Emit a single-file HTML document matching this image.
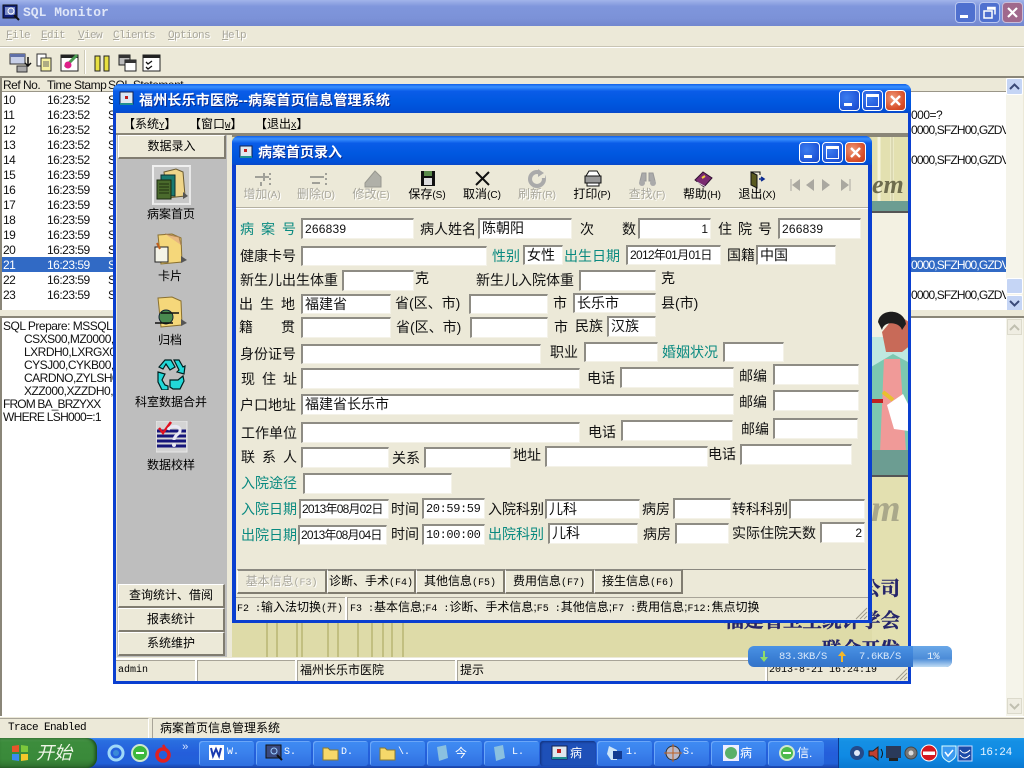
<!DOCTYPE html>
<html><head><meta charset="utf-8"><title>SQL Monitor</title>
<style>
html,body{margin:0;padding:0;width:1024px;height:768px;overflow:hidden;background:#fff}
body{position:relative;font-family:"Liberation Sans","WenQuanYi Zen Hei","Noto Sans CJK SC",sans-serif;font-size:12px;color:#000}
div,i,b,svg,span.a{position:absolute;display:block;font-style:normal;font-weight:normal;box-sizing:border-box}
.t{font-size:14px;line-height:16px;white-space:nowrap;color:#111}
.c{color:#0a8a80}
.m{font-family:"Liberation Mono","WenQuanYi Zen Hei",monospace}
.in{background:#fff;border-top:2px solid #8e8c84;border-left:2px solid #8e8c84;border-right:1px solid #f4f2e8;border-bottom:1px solid #f4f2e8;font-size:14px;line-height:16px;padding:0 0 0 2px;white-space:nowrap;overflow:hidden;color:#111}
.r{font-size:12px;line-height:15px;white-space:nowrap;letter-spacing:-.5px;color:#111}
.n{letter-spacing:-.85px}
.btn{background:#ece9d8;border-top:1px solid #fff;border-left:1px solid #fff;border-right:2px solid #807c70;border-bottom:2px solid #807c70;text-align:center;line-height:21px;font-size:12px}
.tab{background:#ece9d8;border-top:2px solid #8a8880;border-left:1px solid #fff;border-right:2px solid #807c70;border-bottom:2px solid #807c70;text-align:center;line-height:21px;font-size:12px;white-space:nowrap;top:569px;height:25px}
.tb{font-size:12px;line-height:14px;white-space:nowrap;top:187px;width:56px;text-align:center}
.g{color:#a9a79c;text-shadow:1px 1px 0 #fff}
.mn{top:29px;font-size:11px;line-height:14px;letter-spacing:-.6px}
.ws{width:21px;height:21px;border:1px solid #fff;border-radius:4px;background:radial-gradient(circle at 35% 35%,#3c7df0,#1f55d8 70%,#1a48c0)}
.wc{background:radial-gradient(circle at 35% 35%,#ef9a78,#d84f2a 65%,#c23c18)}
.tk{top:741px;height:25px;background:linear-gradient(#3f8cf3,#3a80ec 50%,#2f6fe0);border-radius:3px;color:#fff;font-size:12px;line-height:24px;white-space:nowrap;box-shadow:inset 1px 1px 0 #6aa6f8}
.lab{font-size:12px;line-height:14px;text-align:center;left:118px;width:108px}
.sf{font-family:'Noto Serif CJK SC',serif;font-weight:700;font-size:19.5px;line-height:24px;color:#25256a;white-space:nowrap;text-align:right;-webkit-text-stroke:.4px #25256a}
</style></head><body>

<!-- Outer SQL Monitor window -->
<div style="left:0;top:0;width:1024px;height:768px;background:#ece9d8"></div>
<div style="left:0;top:0;width:1024px;height:26px;background:linear-gradient(#a2b4ea,#7f96dc 25%,#7c92d8 70%,#7287cf)"></div>
<svg style="left:2px;top:4px" width="18" height="18"><rect x="1" y="1" width="14" height="13" fill="#10207a" stroke="#111"/><rect x="3" y="3" width="10" height="8" fill="#7a8cc8"/><circle cx="9" cy="7" r="3" fill="none" stroke="#fff"/><path d="M12 11l5 5" stroke="#111" stroke-width="2"/></svg>
<div class="m" style="left:23px;top:5px;font-size:13px;line-height:16px;color:#dfe6f8;font-weight:700">SQL Monitor</div>
<div style="left:955px;top:2px;width:21px;height:21px;border:1px solid #b8c6f0;border-radius:4px;background:#4f70cf"></div>
<div style="left:960px;top:15px;width:8px;height:3px;background:#fff"></div>
<div style="left:979px;top:2px;width:21px;height:21px;border:1px solid #b8c6f0;border-radius:4px;background:#4f70cf"></div>
<svg style="left:982px;top:5px" width="15" height="15"><path d="M5 2.5h8v7M5 4h8" fill="none" stroke="#fff" stroke-width="1.5"/><rect x="2" y="6" width="8" height="7" fill="none" stroke="#fff" stroke-width="1.5"/></svg>
<div style="left:1002px;top:2px;width:21px;height:21px;border:1px solid #c8bcd8;border-radius:4px;background:#a0688c"></div>
<svg style="left:1005px;top:5px" width="15" height="15"><path d="M3 3l9 9M12 3l-9 9" stroke="#fff" stroke-width="2.2"/></svg>

<!-- menu -->
<div class="m g mn" style="left:6px"><u>F</u>ile</div>
<div class="m g mn" style="left:41px"><u>E</u>dit</div>
<div class="m g mn" style="left:78px"><u>V</u>iew</div>
<div class="m g mn" style="left:113px"><u>C</u>lients</div>
<div class="m g mn" style="left:168px"><u>O</u>ptions</div>
<div class="m g mn" style="left:222px"><u>H</u>elp</div>
<div style="left:0;top:46px;width:1024px;height:2px;background:#fff;border-top:1px solid #c8c4b4"></div>
<!-- toolbar icons -->
<svg style="left:8px;top:52px" width="170" height="22">
<rect x="2" y="2" width="15" height="10" fill="#c8d0e8" stroke="#333"/><rect x="2" y="2" width="15" height="3" fill="#6070a8"/><rect x="9" y="14" width="10" height="6" fill="#aaa" stroke="#333"/><path d="M20 5v8m-3-2l3 3 3-3" fill="none" stroke="#111" stroke-width="1.5"/>
<rect x="29" y="2" width="9" height="12" fill="#fff" stroke="#333"/><rect x="33" y="6" width="10" height="13" fill="#f6f0a0" stroke="#333"/><path d="M35 10h6M35 12h6M35 14h6" stroke="#666"/>
<rect x="53" y="3" width="17" height="16" fill="#fff" stroke="#222"/><rect x="53" y="3" width="17" height="3" fill="#222"/><path d="M57 15l8-8 4-4" stroke="#4a9a50" stroke-width="3"/><circle cx="60" cy="13" r="3.5" fill="#e0208a"/>
<rect x="87" y="4" width="5" height="15" fill="#e8e040" stroke="#222"/><rect x="96" y="4" width="5" height="15" fill="#e8e040" stroke="#222"/>
<rect x="111" y="3" width="11" height="10" fill="#bbb" stroke="#222"/><rect x="111" y="3" width="11" height="3" fill="#333"/><rect x="117" y="8" width="11" height="11" fill="#fff" stroke="#222"/><rect x="117" y="8" width="11" height="3" fill="#333"/>
<rect x="135" y="3" width="17" height="16" fill="#fff" stroke="#222"/><rect x="135" y="3" width="17" height="3" fill="#222"/><path d="M138 10l2 2 4-3M138 15l2 2 4-3" fill="none" stroke="#111" stroke-width="1.3"/>
</svg>
<div style="left:84px;top:50px;width:2px;height:24px;background:#cfcbb8;border-right:1px solid #fff"></div>

<!-- list -->
<div style="left:0;top:76px;width:1024px;height:2px;background:#8a8678"></div>
<div style="left:2px;top:78px;width:1004px;height:232px;background:#fff"></div>
<div style="left:2px;top:78px;width:1004px;height:14px;background:#ece9d8;border-bottom:1px solid #9a9688"></div>
<div class="r" style="left:3px;top:78px">Ref No.</div><div class="r" style="left:47px;top:78px">Time Stamp</div><div class="r" style="left:108px;top:78px">SQL Statement</div>
<div style="left:0;top:78px;width:2px;height:232px;background:#8a8678"></div>
<div style="left:2px;top:257px;width:1004px;height:15px;background:#316ac5"></div>
<div class="r" style="left:3px;top:93px">10</div><div class="r" style="left:47px;top:93px">16:23:52</div><div class="r" style="left:108px;top:93px">S</div>
<div class="r" style="left:3px;top:108px">11</div><div class="r" style="left:47px;top:108px">16:23:52</div><div class="r" style="left:108px;top:108px">S</div>
<div class="r" style="left:3px;top:123px">12</div><div class="r" style="left:47px;top:123px">16:23:52</div><div class="r" style="left:108px;top:123px">S</div>
<div class="r" style="left:3px;top:138px">13</div><div class="r" style="left:47px;top:138px">16:23:52</div><div class="r" style="left:108px;top:138px">S</div>
<div class="r" style="left:3px;top:153px">14</div><div class="r" style="left:47px;top:153px">16:23:52</div><div class="r" style="left:108px;top:153px">S</div>
<div class="r" style="left:3px;top:168px">15</div><div class="r" style="left:47px;top:168px">16:23:59</div><div class="r" style="left:108px;top:168px">S</div>
<div class="r" style="left:3px;top:183px">16</div><div class="r" style="left:47px;top:183px">16:23:59</div><div class="r" style="left:108px;top:183px">S</div>
<div class="r" style="left:3px;top:198px">17</div><div class="r" style="left:47px;top:198px">16:23:59</div><div class="r" style="left:108px;top:198px">S</div>
<div class="r" style="left:3px;top:213px">18</div><div class="r" style="left:47px;top:213px">16:23:59</div><div class="r" style="left:108px;top:213px">S</div>
<div class="r" style="left:3px;top:228px">19</div><div class="r" style="left:47px;top:228px">16:23:59</div><div class="r" style="left:108px;top:228px">S</div>
<div class="r" style="left:3px;top:243px">20</div><div class="r" style="left:47px;top:243px">16:23:59</div><div class="r" style="left:108px;top:243px">S</div>
<div class="r" style="left:3px;top:258px;color:#fff">21</div><div class="r" style="left:47px;top:258px;color:#fff">16:23:59</div><div class="r" style="left:108px;top:258px;color:#fff">S</div>
<div class="r" style="left:3px;top:273px">22</div><div class="r" style="left:47px;top:273px">16:23:59</div><div class="r" style="left:108px;top:273px">S</div>
<div class="r" style="left:3px;top:288px">23</div><div class="r" style="left:47px;top:288px">16:23:59</div><div class="r" style="left:108px;top:288px">S</div>
<div class="r" style="left:911px;top:108px">000=?</div>
<div style="left:911px;top:123px;width:95px;height:15px;overflow:hidden"><div class="r n" style="left:0;top:0">0000,SFZH00,GZDV</div></div>
<div style="left:911px;top:153px;width:95px;height:15px;overflow:hidden"><div class="r n" style="left:0;top:0">0000,SFZH00,GZDV</div></div>
<div style="left:911px;top:258px;width:95px;height:15px;overflow:hidden"><div class="r n" style="left:0;top:0;color:#fff">0000,SFZH00,GZDV</div></div>
<div style="left:911px;top:288px;width:95px;height:15px;overflow:hidden"><div class="r n" style="left:0;top:0">0000,SFZH00,GZDV</div></div>
<!-- list scrollbar -->
<div style="left:1006px;top:78px;width:17px;height:232px;background:#f5f4ea"></div>
<div style="left:1006px;top:78px;width:17px;height:17px;background:#c5d5f5;border:1px solid #fff;border-radius:2px"></div>
<svg style="left:1008px;top:81px" width="13" height="11"><path d="M2 8l4.500-4.500L11 8" fill="none" stroke="#3a4a78" stroke-width="2"/></svg>
<div style="left:1006px;top:278px;width:17px;height:16px;background:#c5d5f5;border:1px solid #fff;border-radius:2px"></div>
<div style="left:1006px;top:295px;width:17px;height:17px;background:#c5d5f5;border:1px solid #fff;border-radius:2px"></div>
<svg style="left:1008px;top:298px" width="13" height="11"><path d="M2 3l4.500 4.500L11 3" fill="none" stroke="#3a4a78" stroke-width="2"/></svg>

<!-- lower pane -->
<div style="left:0;top:310px;width:1024px;height:8px;background:#ece9d8;border-bottom:2px solid #8a8678"></div>
<div style="left:0;top:318px;width:2px;height:398px;background:#8a8678"></div>
<div style="left:2px;top:318px;width:1004px;height:398px;background:#fff"></div>
<div class="r" style="left:3px;top:319px">SQL Prepare: MSSQL - Prepared</div>
<div class="r" style="left:24px;top:332px">CSXS00,MZ0000,</div>
<div class="r" style="left:24px;top:345px">LXRDH0,LXRGX0,</div>
<div class="r" style="left:24px;top:358px">CYSJ00,CYKB00,</div>
<div class="r" style="left:24px;top:371px">CARDNO,ZYLSH0,</div>
<div class="r" style="left:24px;top:384px">XZZ000,XZZDH0,</div>
<div class="r" style="left:3px;top:397px;letter-spacing:-.85px">FROM BA_BRZYXX</div>
<div class="r" style="left:3px;top:410px;letter-spacing:-.7px">WHERE LSH000=:1</div>
<div style="left:1006px;top:318px;width:17px;height:398px;background:#f5f4ea"></div>
<div style="left:1007px;top:319px;width:15px;height:16px;background:#efede2;border:1px solid #dcdacc"></div>
<svg style="left:1008px;top:322px" width="13" height="11"><path d="M2 8l4.500-4.500L11 8" fill="none" stroke="#c0bfb0" stroke-width="2"/></svg>
<div style="left:1007px;top:698px;width:15px;height:16px;background:#efede2;border:1px solid #dcdacc"></div>
<svg style="left:1008px;top:701px" width="13" height="11"><path d="M2 3l4.500 4.500L11 3" fill="none" stroke="#c0bfb0" stroke-width="2"/></svg>

<!-- Status -->
<div style="left:0;top:716px;width:1024px;height:22px;background:#ece9d8;border-top:1px solid #fff"></div>
<div style="left:0;top:718px;width:149px;height:20px;border-top:1px solid #a8a498;border-right:1px solid #fff"></div>
<div style="left:152px;top:718px;width:872px;height:20px;border-top:1px solid #a8a498;border-left:1px solid #a8a498"></div>
<div class="m" style="left:8px;top:721px;font-size:11px;line-height:14px;letter-spacing:-.6px">Trace Enabled</div>
<div style="left:160px;top:721px;font-size:12px;line-height:14px">病案首页信息管理系统</div>

<!-- MDI window -->
<div style="left:113px;top:84px;width:798px;height:600px;background:#0a3fd0;border-radius:7px 7px 0 0"></div>
<div style="left:113px;top:84px;width:798px;height:29px;border-radius:7px 7px 0 0;background:linear-gradient(#1060e8,#3a90ff 10%,#0a5ce8 25%,#0058e0 60%,#0050d8 90%,#0a48c8)"></div>
<svg style="left:119px;top:91px" width="16" height="16"><rect x="1" y="1" width="13" height="12" fill="#dfe8ee" stroke="#102050"/><rect x="3" y="3" width="9" height="7" fill="#d8e8f8"/><rect x="6" y="5" width="3" height="3" fill="#c02020"/><rect x="1" y="12" width="13" height="2" fill="#209090"/></svg>
<div style="left:139px;top:92px;font-size:14px;line-height:16px;color:#fff;font-weight:700;white-space:nowrap;letter-spacing:.2px;text-shadow:1px 1px 0 #0a2a90">福州长乐市医院--病案首页信息管理系统</div>
<div class="ws" style="left:839px;top:90px"></div><div style="left:844px;top:103px;width:8px;height:3px;background:#fff"></div>
<div class="ws" style="left:862px;top:90px"></div><div style="left:866px;top:94px;width:13px;height:13px;border:1px solid #fff;border-top:3px solid #fff"></div>
<div class="ws wc" style="left:885px;top:90px"></div><svg style="left:888px;top:93px" width="15" height="15"><path d="M3 3l9 9M12 3l-9 9" stroke="#fff" stroke-width="2.4"/></svg>
<div style="left:116px;top:113px;width:792px;height:568px;background:#ece9d8"></div>
<div style="left:116px;top:133px;width:792px;height:2px;background:#8a8678"></div>
<div style="left:123px;top:116px;font-size:12px;line-height:16px;white-space:nowrap">【系统<span class="m" style="font-size:9px"><u>Y</u></span>】</div>
<div style="left:189px;top:116px;font-size:12px;line-height:16px;white-space:nowrap">【窗口<span class="m" style="font-size:9px"><u>W</u></span>】</div>
<div style="left:255px;top:116px;font-size:12px;line-height:16px;white-space:nowrap">【退出<span class="m" style="font-size:9px"><u>X</u></span>】</div>

<!-- side panel -->
<div style="left:117px;top:135px;width:110px;height:522px;background:#bebebe"></div>
<div class="btn" style="left:118px;top:135px;width:108px;height:24px">数据录入</div>
<div class="btn" style="left:118px;top:584px;width:107px;height:24px">查询统计、借阅</div>
<div class="btn" style="left:118px;top:608px;width:107px;height:24px">报表统计</div>
<div class="btn" style="left:118px;top:632px;width:107px;height:24px">系统维护</div>
<div style="left:152px;top:165px;width:39px;height:40px;background:#c8c8c8;border:2px solid #f0f0f0;border-right-color:#e8e8e8;border-bottom-color:#e8e8e8"></div>
<svg style="left:153px;top:166px" width="38" height="38">
<path d="M11 6l12-3 7 3 2 24-18 2z" fill="#efd58a" stroke="#6a5a30"/><path d="M30 26l5 4-5 3z" fill="#555"/>
<rect x="8" y="9" width="14" height="21" fill="#1a7a70" stroke="#103030"/><rect x="4" y="14" width="14" height="19" fill="#4a6a2c" stroke="#1a2a10"/><path d="M6 18h10M6 21h10M6 24h10M6 27h10" stroke="#203010"/></svg>
<div class="lab" style="top:207px;left:117px">病案首页</div>
<svg style="left:153px;top:232px" width="36" height="36"><path d="M5 3l14-1 9 4 1 24-21 2z" fill="#f5d77a" stroke="#8a7030"/><path d="M12 2l14 3 2 8" fill="#e8b880" stroke="#a88050"/><path d="M28 24l6 4-6 3z" fill="#555"/><rect x="2" y="15" width="13" height="15" fill="#f4f4e8" stroke="#222"/><path d="M4 11l3 6" stroke="#c06020" stroke-width="2"/></svg>
<div class="lab" style="top:269px;left:116px">卡片</div>
<svg style="left:153px;top:295px" width="36" height="36"><path d="M5 3l14-1 9 4 1 24-21 2z" fill="#f5d77a" stroke="#8a7030"/><path d="M28 24l6 4-6 3z" fill="#555"/><circle cx="13" cy="22" r="7" fill="#4a8a50" stroke="#123"/><path d="M2 28h18M8 18h18" stroke="#111" stroke-width="1.5"/></svg>
<div class="lab" style="top:333px;left:116px">归档</div>
<svg style="left:156px;top:358px" width="30" height="32"><path d="M9 2h6l4 7-5 3-4-6-3 5-4-2zM18 2h5l4 7 2-1-1 8-7-2 2-2zM2 14l7 2-3 6 3 5 3 1v4H6l-4-8zM14 29v-7l8 0 5-4 1 5-4 8h-7z" fill="#22d8d8" stroke="#002020" stroke-width="1.2"/></svg>
<div class="lab" style="top:395px;left:117px;white-space:nowrap">科室数据合并</div>
<svg style="left:156px;top:421px" width="32" height="32"><rect x="0" y="0" width="31" height="31" fill="#d4d4d4" stroke="#e8e8e8"/><path d="M1 10h29M1 15h29M1 20h29M1 25h29" stroke="#15157a" stroke-width="3"/><path d="M3 7l4 5 8-11" fill="none" stroke="#e01020" stroke-width="2.5"/><path d="M12 9c2-5 13-5 12 1 0 3-6 4-6 9" fill="none" stroke="#e8e8f4" stroke-width="3"/><circle cx="18" cy="24" r="2" fill="#e8e8f4"/></svg>
<div class="lab" style="top:458px;left:117px">数据校样</div>

<!-- desktop background image -->
<div style="left:232px;top:135px;width:676px;height:522px;background:#dedba8;border-top:2px solid #8a8678;overflow:hidden">
<svg style="left:0;top:0" width="676" height="522">
<rect x="640" y="0" width="36" height="522" fill="#e3e0b0"/>
<rect x="639" y="75" width="37" height="175" fill="#f3f1e2"/>
<path d="M647 0v64M660 0v64" stroke="#f6f4dc" stroke-width="3"/><path d="M660 0v64" stroke="#c0bd88" stroke-width="1"/>
<path d="M35 485v37M45 485v37M65 485v37M70 485v37M96 485v37M106 485v37M126 485v37M140 485v37M151 485v37M160 485v37M171 485v37" stroke="#c2bf80" stroke-width="2"/>
<rect x="639" y="64" width="37" height="11" fill="#6c9d92"/><rect x="639" y="74" width="37" height="2" fill="#555"/>
<rect x="639" y="173" width="37" height="142" fill="#f3f1e2"/>
<rect x="639" y="200" width="37" height="115" fill="#bfe8e0"/>
<path d="M650 195l15-18 15 10v20l-10 8h-16z" fill="#c86a58"/>
<path d="M646 185c2-14 26-14 28 2l-4 6c-2-8-18-10-20 0z" fill="#1d1d1d"/>
<path d="M639 230l22-13 15 8v90h-37z" fill="#7cc8b0"/>
<path d="M652 222l16 0 6 93h-26z" fill="#f09a98"/>
<path d="M655 268l16-11 6 12v25l-15-2z" fill="#fff"/>
<rect x="639" y="262" width="12" height="4" fill="#c02020"/>
<path d="M651 255l10 8" stroke="#e8c030" stroke-width="4"/>
<rect x="639" y="313" width="37" height="26" fill="#6c9d92"/><rect x="639" y="338" width="37" height="2" fill="#555"/>
</svg>
<div style="left:640px;top:34px;font-family:'Liberation Serif',serif;font-style:italic;font-weight:700;font-size:26px;line-height:28px;color:#6e6c4e">em</div>
<div style="left:639px;top:352px;font-family:'Liberation Serif',serif;font-style:italic;font-weight:700;font-size:38px;line-height:40px;color:#aaa88a">m</div>
<div class="sf" style="left:570px;top:438px;width:98px">有限公司</div>
<div class="sf" style="left:470px;top:470px;width:198px">福建省卫生统计学会</div>
<div class="sf" style="left:570px;top:499px;width:98px">联合开发</div>
</div>

<!-- MDI status -->
<div style="left:116px;top:658px;width:792px;height:2px;background:#fff"></div>
<div style="left:116px;top:660px;width:792px;height:21px;background:#ece9d8;border-top:1px solid #a8a498"></div>
<div style="left:195px;top:660px;width:3px;height:21px;background:#fff;border-right:1px solid #a8a498"></div>
<div style="left:295px;top:660px;width:3px;height:21px;background:#fff;border-right:1px solid #a8a498"></div>
<div style="left:455px;top:660px;width:3px;height:21px;background:#fff;border-right:1px solid #a8a498"></div>
<div style="left:765px;top:660px;width:3px;height:21px;background:#fff;border-right:1px solid #a8a498"></div>
<div class="m" style="left:118px;top:664px;font-size:10px;line-height:14px">admin</div>
<div style="left:300px;top:663px;font-size:12px;line-height:14px">福州长乐市医院</div>
<div style="left:460px;top:663px;font-size:12px;line-height:14px">提示</div>
<div class="m" style="left:769px;top:664px;font-size:10px;line-height:13px;white-space:nowrap">2013-8-21 16:24:19</div>
<svg style="left:895px;top:668px" width="13" height="13"><path d="M12 1L1 12M12 5L5 12M12 9l-3 3" stroke="#a09c8c"/></svg>

<!-- Child window -->
<div style="left:232px;top:136px;width:640px;height:487px;background:#0a3fd0;border-radius:7px 7px 0 0"></div>
<div style="left:232px;top:136px;width:640px;height:29px;border-radius:7px 7px 0 0;background:linear-gradient(#1060e8,#3a90ff 10%,#0a5ce8 25%,#0058e0 60%,#0050d8 90%,#0a48c8)"></div>
<svg style="left:239px;top:145px" width="14" height="14"><rect x="1" y="1" width="12" height="11" fill="#dfe8ee" stroke="#102050"/><rect x="5" y="4" width="3" height="3" fill="#c02020"/><rect x="1" y="11" width="12" height="2" fill="#209090"/></svg>
<div style="left:258px;top:144px;font-size:14px;line-height:16px;color:#fff;font-weight:700;white-space:nowrap;text-shadow:1px 1px 0 #0a2a90">病案首页录入</div>
<div class="ws" style="left:799px;top:142px"></div><div style="left:804px;top:155px;width:8px;height:3px;background:#fff"></div>
<div class="ws" style="left:822px;top:142px"></div><div style="left:826px;top:146px;width:13px;height:13px;border:1px solid #fff;border-top:3px solid #fff"></div>
<div class="ws wc" style="left:845px;top:142px"></div><svg style="left:848px;top:145px" width="15" height="15"><path d="M3 3l9 9M12 3l-9 9" stroke="#fff" stroke-width="2.4"/></svg>
<div style="left:236px;top:165px;width:632px;height:455px;background:#ece9d8"></div>
<div style="left:236px;top:207px;width:632px;height:2px;background:#b4b0a0;border-bottom:1px solid #fff"></div>

<!-- toolbar icons -->
<svg style="left:236px;top:168px" width="632" height="22">
<g stroke="#a0a098" stroke-width="2" fill="none"><path d="M19 9h14M28 5v8M34 5v2M34 10v2M34 15v2M25 14v4"/></g>
<g stroke="#a0a098" stroke-width="2" fill="none"><path d="M74 9h14M90 5v2M90 10v2M90 15v2M76 15h8"/></g>
<path d="M129 15l10-12 6 6v10h-16z" fill="#b0b0a8" stroke="#98988f"/>
<rect x="185" y="3" width="14" height="15" fill="#111"/><rect x="188" y="3" width="8" height="5" fill="#5a8a4a"/><rect x="188" y="10" width="8" height="7" fill="#ddd"/>
<path d="M240 4l13 13M253 4l-13 13" stroke="#111" stroke-width="2"/>
<circle cx="301" cy="11" r="7" fill="none" stroke="#aaa" stroke-width="4"/><rect x="302" y="2" width="7" height="8" fill="#ece9d8"/><path d="M302 1l6 4-6 4z" fill="#aaa"/>
<path d="M350 8l3-5h8l3 5z" fill="#fff" stroke="#111"/><rect x="349" y="8" width="16" height="7" fill="#999" stroke="#111"/><path d="M351 15h12v3h-12z" fill="#fff" stroke="#111"/>
<path d="M406 5h4v8h-6zM413 5h4l2 8h-6z" fill="#aaa" stroke="#999"/><circle cx="406" cy="15" r="3" fill="#aaa"/><circle cx="417" cy="15" r="3" fill="#aaa"/>
<path d="M459 12l8-8 9 6-8 9z" fill="#7a2a70" stroke="#301030"/><path d="M461 14l9 5" stroke="#ddd"/><path d="M466 10l3-2" stroke="#f0d040" stroke-width="2"/>
<path d="M515 4l6 3v13l-6-3z" fill="#5a5a20" stroke="#111"/><path d="M515 4h9v3" fill="none" stroke="#111"/><path d="M523 11h4m-2-2l3 2-3 2" stroke="#0a2a90" stroke-width="1.5" fill="none"/>
</svg>
<svg style="left:788px;top:176px" width="64" height="18" fill="#aaa8a0"><path d="M3 3v12" stroke="#aaa8a0"/><path d="M12 3l-8 6 8 6z"/><path d="M26 3l-8 6 8 6z"/><path d="M34 3l8 6-8 6z"/><path d="M53 3l8 6-8 6z"/><path d="M62 3v12" stroke="#aaa8a0"/></svg>
<div class="tb g" style="left:234px">增加<span style="font-size:10px">(A)</span></div>
<div class="tb g" style="left:288px">删除<span style="font-size:10px">(D)</span></div>
<div class="tb g" style="left:343px">修改<span style="font-size:10px">(E)</span></div>
<div class="tb" style="left:399px">保存<span style="font-size:10px">(S)</span></div>
<div class="tb" style="left:454px">取消<span style="font-size:10px">(C)</span></div>
<div class="tb g" style="left:509px">刷新<span style="font-size:10px">(R)</span></div>
<div class="tb" style="left:564px">打印<span style="font-size:10px">(P)</span></div>
<div class="tb g" style="left:619px">查找<span style="font-size:10px">(F)</span></div>
<div class="tb" style="left:674px">帮助<span style="font-size:10px">(H)</span></div>
<div class="tb" style="left:729px">退出<span style="font-size:10px">(X)</span></div>

<!-- Form -->
<div class="t c" style="left:240px;top:221px;letter-spacing:7px">病案号</div>
<div class="in" style="left:301px;top:218px;width:113px;height:21px;font-size:12px;letter-spacing:.2px;padding-top:1px">266839</div>
<div class="t" style="left:420px;top:221px">病人姓名</div>
<div class="in" style="left:478px;top:218px;width:94px;height:21px">陈朝阳</div>
<div class="t" style="left:580px;top:221px">次</div><div class="t" style="left:622px;top:221px">数</div>
<div class="in" style="left:638px;top:218px;width:73px;height:21px;font-size:12px;text-align:right;padding-right:2px;padding-top:1px">1</div>
<div class="t" style="left:718px;top:221px;letter-spacing:6px">住院号</div>
<div class="in" style="left:778px;top:218px;width:83px;height:21px;font-size:12px;letter-spacing:.2px;padding-top:1px">266839</div>

<div class="t" style="left:240px;top:248px">健康卡号</div>
<div class="in" style="left:301px;top:246px;width:186px;height:20px"></div>
<div class="t c" style="left:492px;top:248px">性别</div>
<div class="in" style="left:523px;top:245px;width:40px;height:20px">女性</div>
<div class="t c" style="left:564px;top:248px">出生日期</div>
<div class="in" style="left:626px;top:245px;width:95px;height:20px;font-size:12px;letter-spacing:-.7px">2012年01月01日</div>
<div class="t" style="left:727px;top:247px">国籍</div>
<div class="in" style="left:756px;top:245px;width:80px;height:20px">中国</div>

<div class="t" style="left:240px;top:272px">新生儿出生体重</div>
<div class="in" style="left:342px;top:270px;width:72px;height:21px"></div>
<div class="t" style="left:415px;top:270px">克</div>
<div class="t" style="left:476px;top:272px">新生儿入院体重</div>
<div class="in" style="left:579px;top:270px;width:77px;height:21px"></div>
<div class="t" style="left:661px;top:270px">克</div>

<div class="t" style="left:239px;top:296px;letter-spacing:7px">出生地</div>
<div class="in" style="left:301px;top:294px;width:90px;height:20px">福建省</div>
<div class="t" style="left:395px;top:295px">省(区、市)</div>
<div class="in" style="left:469px;top:294px;width:79px;height:20px"></div>
<div class="t" style="left:553px;top:295px">市</div>
<div class="in" style="left:573px;top:293px;width:83px;height:20px">长乐市</div>
<div class="t" style="left:661px;top:295px">县(市)</div>

<div class="t" style="left:239px;top:319px">籍</div><div class="t" style="left:281px;top:319px">贯</div>
<div class="in" style="left:301px;top:317px;width:90px;height:21px"></div>
<div class="t" style="left:396px;top:319px">省(区、市)</div>
<div class="in" style="left:470px;top:317px;width:78px;height:21px"></div>
<div class="t" style="left:554px;top:319px">市</div>
<div class="t" style="left:575px;top:318px">民族</div>
<div class="in" style="left:607px;top:316px;width:49px;height:21px">汉族</div>

<div class="t" style="left:240px;top:346px">身份证号</div>
<div class="in" style="left:301px;top:344px;width:240px;height:20px"></div>
<div class="t" style="left:550px;top:344px">职业</div>
<div class="in" style="left:584px;top:342px;width:74px;height:20px"></div>
<div class="t c" style="left:662px;top:344px">婚姻状况</div>
<div class="in" style="left:723px;top:342px;width:61px;height:20px"></div>

<div class="t" style="left:241px;top:371px;letter-spacing:7px">现住址</div>
<div class="in" style="left:301px;top:368px;width:279px;height:21px"></div>
<div class="t" style="left:587px;top:370px">电话</div>
<div class="in" style="left:620px;top:367px;width:114px;height:21px"></div>
<div class="t" style="left:739px;top:368px">邮编</div>
<div class="in" style="left:773px;top:364px;width:86px;height:21px"></div>

<div class="t" style="left:240px;top:397px">户口地址</div>
<div class="in" style="left:301px;top:394px;width:433px;height:21px">福建省长乐市</div>
<div class="t" style="left:739px;top:394px">邮编</div>
<div class="in" style="left:773px;top:390px;width:86px;height:21px"></div>

<div class="t" style="left:241px;top:425px">工作单位</div>
<div class="in" style="left:301px;top:422px;width:279px;height:21px"></div>
<div class="t" style="left:588px;top:424px">电话</div>
<div class="in" style="left:621px;top:420px;width:112px;height:21px"></div>
<div class="t" style="left:741px;top:421px">邮编</div>
<div class="in" style="left:773px;top:418px;width:85px;height:21px"></div>

<div class="t" style="left:241px;top:449px;letter-spacing:7px">联系人</div>
<div class="in" style="left:301px;top:447px;width:88px;height:21px"></div>
<div class="t" style="left:392px;top:450px">关系</div>
<div class="in" style="left:424px;top:447px;width:87px;height:21px"></div>
<div class="t" style="left:513px;top:447px">地址</div>
<div class="in" style="left:545px;top:446px;width:163px;height:21px"></div>
<div class="t" style="left:708px;top:446px">电话</div>
<div class="in" style="left:740px;top:444px;width:112px;height:21px"></div>

<div class="t c" style="left:241px;top:475px">入院途径</div>
<div class="in" style="left:303px;top:473px;width:149px;height:21px"></div>

<div class="t c" style="left:241px;top:501px">入院日期</div>
<div class="in" style="left:299px;top:499px;width:90px;height:20px;font-size:12px;letter-spacing:-.8px;padding-left:1px">2013年08月02日</div>
<div class="t" style="left:391px;top:501px">时间</div>
<div class="in m" style="left:422px;top:498px;width:63px;height:21px;font-size:12px;letter-spacing:-.4px;padding-top:1px">20:59:59</div>
<div class="t" style="left:488px;top:501px">入院科别</div>
<div class="in" style="left:545px;top:499px;width:95px;height:20px">儿科</div>
<div class="t" style="left:642px;top:501px">病房</div>
<div class="in" style="left:673px;top:498px;width:58px;height:21px"></div>
<div class="t" style="left:732px;top:501px">转科科别</div>
<div class="in" style="left:789px;top:499px;width:76px;height:20px"></div>

<div class="t c" style="left:241px;top:527px">出院日期</div>
<div class="in" style="left:298px;top:525px;width:89px;height:20px;font-size:12px;letter-spacing:-.8px;padding-left:1px">2013年08月04日</div>
<div class="t" style="left:391px;top:526px">时间</div>
<div class="in m" style="left:422px;top:524px;width:63px;height:21px;font-size:12px;letter-spacing:-.4px;padding-top:1px">10:00:00</div>
<div class="t c" style="left:488px;top:526px">出院科别</div>
<div class="in" style="left:548px;top:523px;width:90px;height:21px">儿科</div>
<div class="t" style="left:643px;top:526px">病房</div>
<div class="in" style="left:675px;top:523px;width:54px;height:21px"></div>
<div class="t" style="left:732px;top:525px">实际住院天数</div>
<div class="in" style="left:820px;top:522px;width:45px;height:21px;font-size:12px;text-align:right;padding-right:2px;padding-top:1px">2</div>

<!-- Tabs -->
<div style="left:237px;top:569px;width:629px;height:1px;background:#8a8880"></div>
<div class="tab g" style="left:237px;width:90px;background:#ece9d8">基本信息<span class="m" style="font-size:10px">(F3)</span></div>
<div class="tab" style="left:327px;width:89px">诊断、手术<span class="m" style="font-size:10px">(F4)</span></div>
<div class="tab" style="left:416px;width:89px">其他信息<span class="m" style="font-size:10px">(F5)</span></div>
<div class="tab" style="left:505px;width:89px">费用信息<span class="m" style="font-size:10px">(F7)</span></div>
<div class="tab" style="left:594px;width:89px">接生信息<span class="m" style="font-size:10px">(F6)</span></div>

<!-- child status -->
<div style="left:236px;top:597px;width:632px;height:1px;background:#a8a498"></div>
<div style="left:345px;top:597px;width:3px;height:23px;background:#fff;border-right:1px solid #a8a498"></div>
<div style="left:237px;top:600px;font-size:12px;line-height:14px;white-space:nowrap"><span class="m" style="font-size:10px">F2 :</span>输入法切换<span class="m" style="font-size:10px">(开)</span></div>
<div style="left:350px;top:600px;font-size:12px;line-height:14px;white-space:nowrap"><span class="m" style="font-size:10px">F3 :</span>基本信息;<span class="m" style="font-size:10px">F4 :</span>诊断、手术信息;<span class="m" style="font-size:10px">F5 :</span>其他信息;<span class="m" style="font-size:10px">F7 :</span>费用信息;<span class="m" style="font-size:10px">F12:</span>焦点切换</div>
<svg style="left:855px;top:607px" width="13" height="13"><path d="M12 1L1 12M12 5L5 12M12 9l-3 3" stroke="#a09c8c"/></svg>

<!-- Bandwidth widget -->
<div style="left:748px;top:646px;width:204px;height:21px;border-radius:6px;background:linear-gradient(#4a92e4,#3a7ed4 60%,#3474c8);overflow:hidden">
<div style="left:165px;top:0;width:39px;height:21px;background:linear-gradient(#6aa8e8,#4c8cd8 60%,#c0dcf4)"></div></div>
<svg style="left:757px;top:650px" width="14" height="13"><path d="M6 1h2v6h3l-4 5-4-5h3z" fill="#8fdc6a"/></svg>
<svg style="left:835px;top:650px" width="14" height="13"><path d="M6 12h2V6h3L7 1 3 6h3z" fill="#f4b82a"/></svg>
<div class="m" style="left:779px;top:650px;font-size:10.5px;line-height:14px;color:#d8e8fa;letter-spacing:-.3px">83.3KB/S</div>
<div class="m" style="left:859px;top:650px;font-size:10.5px;line-height:14px;color:#d8e8fa;letter-spacing:-.3px">7.6KB/S</div>
<div class="m" style="left:927px;top:650px;font-size:10.5px;line-height:14px;color:#e8f2fc">1%</div>

<!-- Taskbar -->
<div style="left:0;top:738px;width:1024px;height:30px;background:linear-gradient(#3f8cf3 0,#2a6fe0 8%,#245edb 50%,#2160d8 85%,#1941a5)"></div>
<div style="left:0;top:738px;width:97px;height:30px;border-radius:0 10px 10px 0;background:linear-gradient(#4f9a4f,#3c8c3c 15%,#3a8a3a 70%,#2f6e2f);box-shadow:inset -2px 0 3px #1a4a1a"></div>
<svg style="left:10px;top:743px" width="20" height="20"><path d="M2 3l7-1v7H2z" fill="#e8562a"/><path d="M11 2l7 1v6h-7z" fill="#7cc83c"/><path d="M2 11h7v7l-7-1z" fill="#3a8cf0"/><path d="M11 11h7v6l-7 1z" fill="#f4c82a"/></svg>
<div style="left:36px;top:742px;font-size:18px;line-height:22px;color:#f0f6e8;font-style:italic;white-space:nowrap">开始</div>
<svg style="left:107px;top:743px" width="70" height="22">
<circle cx="9" cy="10" r="7" fill="none" stroke="#9fd8f8" stroke-width="3"/><circle cx="9" cy="10" r="3" fill="#3a8ad8"/>
<circle cx="33" cy="10" r="8" fill="#3cb83c" stroke="#cfe8cf" stroke-width="2"/><path d="M29 10h8" stroke="#fff" stroke-width="2"/>
<circle cx="56" cy="12" r="6" fill="none" stroke="#e02020" stroke-width="3.5"/><path d="M56 2l4 6" stroke="#e02020" stroke-width="2.5"/>
</svg>
<div class="m" style="left:182px;top:741px;color:#cfe0ff;font-size:11px;line-height:14px">»</div>

<div class="tk" style="left:199px;width:55px"></div>
<div class="tk" style="left:256px;width:55px"></div>
<div class="tk" style="left:313px;width:55px"></div>
<div class="tk" style="left:370px;width:55px"></div>
<div class="tk" style="left:427px;width:55px"></div>
<div class="tk" style="left:484px;width:55px"></div>
<div class="tk" style="left:540px;width:56px;background:#1e50b8;box-shadow:inset 1px 1px 2px #12307a"></div>
<div class="tk" style="left:597px;width:55px"></div>
<div class="tk" style="left:654px;width:55px"></div>
<div class="tk" style="left:711px;width:55px"></div>
<div class="tk" style="left:768px;width:56px"></div>
<svg style="left:199px;top:741px" width="625" height="25">
<rect x="10" y="4" width="15" height="15" fill="#fff"/><path d="M12 7l2 8 3-7 3 7 2-8" fill="none" stroke="#1a3ab0" stroke-width="2"/>
<rect x="67" y="4" width="15" height="13" fill="#3a4a80" stroke="#111"/><circle cx="75" cy="10" r="3" fill="none" stroke="#9cf"/><path d="M78 14l5 5" stroke="#111" stroke-width="2"/>
<path d="M124 7h5l2 2h8v10h-15z" fill="#f6d86a" stroke="#8a7a30"/>
<path d="M181 7h5l2 2h8v10h-15z" fill="#f6d86a" stroke="#8a7a30"/>
<path d="M238 6l9-2 2 13-9 3z" fill="#8ac0e0"/>
<path d="M295 6l9-2 2 13-9 3z" fill="#8ac0e0"/>
<rect x="353" y="5" width="15" height="13" fill="#dfe8ee" stroke="#102050"/><rect x="358" y="8" width="4" height="4" fill="#c02020"/><rect x="353" y="16" width="15" height="2" fill="#209090"/>
<path d="M410 5l8 4v10h-6l-4-6z" fill="#cce4f8"/><rect x="414" y="10" width="9" height="8" fill="#123a90"/>
<circle cx="474" cy="12" r="7" fill="#b8b8c8" stroke="#333"/><path d="M474 3v18M465 12h18" stroke="#c06020"/>
<rect x="524" y="4" width="16" height="16" fill="#eef"/><circle cx="532" cy="12" r="6" fill="#5ab06a"/>
<circle cx="588" cy="12" r="7" fill="#4cba4c" stroke="#cfe8cf" stroke-width="2"/><path d="M584 12h8" stroke="#fff" stroke-width="2"/>
</svg>
<div class="m" style="left:227px;top:746px;font-size:10px;line-height:14px;color:#fff">W.</div>
<div class="m" style="left:284px;top:746px;font-size:10px;line-height:14px;color:#fff">S.</div>
<div class="m" style="left:341px;top:746px;font-size:10px;line-height:14px;color:#fff">D.</div>
<div class="m" style="left:398px;top:746px;font-size:10px;line-height:14px;color:#fff">\.</div>
<div style="left:455px;top:746px;font-size:12px;line-height:14px;color:#fff">今</div>
<div class="m" style="left:512px;top:746px;font-size:10px;line-height:14px;color:#fff">L.</div>
<div style="left:570px;top:746px;font-size:12px;line-height:14px;color:#fff">病</div>
<div class="m" style="left:626px;top:746px;font-size:10px;line-height:14px;color:#fff">1.</div>
<div class="m" style="left:683px;top:746px;font-size:10px;line-height:14px;color:#fff">S.</div>
<div style="left:740px;top:746px;font-size:12px;line-height:14px;color:#fff">病</div>
<div style="left:797px;top:746px;font-size:12px;line-height:14px;color:#fff">信.</div>

<!-- Tray -->
<div style="left:838px;top:738px;width:186px;height:30px;background:linear-gradient(#1a9cf0,#1590e4 10%,#0f8ae4 60%,#0a78d0);border-left:1px solid #0c3a90"></div>
<svg style="left:848px;top:744px" width="125" height="20">
<circle cx="9" cy="9" r="7" fill="#234a8a"/><circle cx="9" cy="9" r="3" fill="#dfe8f8"/>
<path d="M21 7h4l5-4v13l-5-4h-4z" fill="#c04030" stroke="#222"/><path d="M33 5c2 3 2 6 0 9" stroke="#111" fill="none"/>
<rect x="38" y="2" width="15" height="12" fill="#2a3a5a"/><rect x="41" y="14" width="9" height="3" fill="#222"/>
<circle cx="63" cy="9" r="6" fill="#777" stroke="#444"/><circle cx="63" cy="9" r="2.5" fill="#dcdcdc"/>
<circle cx="81" cy="9" r="8" fill="#d41820" stroke="#fff"/><rect x="75" y="7.5" width="12" height="3.5" fill="#fff"/>
<path d="M94 2h14v8c0 5-7 8-7 8s-7-3-7-8z" fill="#3c9af0" stroke="#dff"/><path d="M97 8l3 4 5-6" fill="none" stroke="#fff" stroke-width="1.5"/>
<rect x="110" y="2" width="14" height="15" fill="#1c4aa8" stroke="#cdf"/><path d="M112 6c3 4 6 4 10 0M112 11c3 4 6 4 10 0" stroke="#fff" fill="none"/>
</svg>
<div class="m" style="left:980px;top:746px;font-size:11px;line-height:14px;color:#e8f4ff;letter-spacing:-.2px">16:24</div>
</body></html>
